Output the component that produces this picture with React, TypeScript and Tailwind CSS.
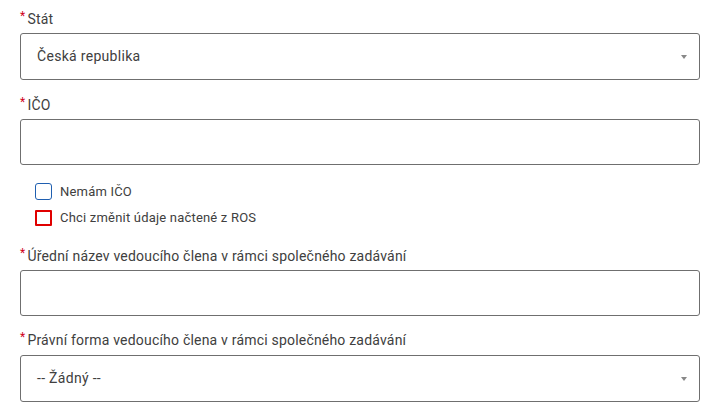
import React from 'react';

function Label({ text }: { text: string }) {
  return (
    <div className="flex h-[20px] items-start leading-[20px] text-[14px] tracking-[0.2px] text-[#404040]">
      <span className="mr-[2px] text-[12px] leading-[14px] text-[#d0021b]">*</span>
      <span>{text}</span>
    </div>
  );
}

function Select({ value }: { value: string }) {
  return (
    <div className="flex h-[47px] w-[680px] items-center justify-between rounded-[3px] border border-[#6f6f6f] bg-white pl-[16px] pr-[12px] text-[14px] tracking-[0.3px] text-[#404040]">
      <span className="[font-variant-ligatures:none]">{value}</span>
      <svg width="6" height="4" viewBox="0 0 6 4">
        <path d="M0 0 L6 0 L3 4 Z" fill="#888" />
      </svg>
    </div>
  );
}

function TextInput() {
  return <div className="h-[46px] w-[680px] rounded-[3px] border border-[#6f6f6f] bg-white" />;
}

function Checkbox({ label, error }: { label: string; error?: boolean }) {
  return (
    <div className="flex h-[17px] items-center gap-[8px] text-[13px] leading-[17px] tracking-[0.2px] text-[#404040]">
      <span
        className={
          error
            ? 'h-[16px] w-[17px] rounded-[1px] border-2 border-[#e00000] bg-white'
            : 'h-[17px] w-[17px] rounded-[3px] border border-[#1f5fb0] bg-white'
        }
      />
      <span>{label}</span>
    </div>
  );
}

export default function App() {
  return (
    <div className="min-h-[416px] bg-white pl-[20px] pt-[9px]" style={{ fontFamily: 'Roboto, "Liberation Sans", sans-serif' }}>
      <Label text="Stát" />
      <div className="mt-[4px]">
        <Select value="Česká republika" />
      </div>

      <div className="mt-[15px]">
        <Label text="IČO" />
      </div>
      <div className="mt-[4px]">
        <TextInput />
      </div>

      <div className="ml-[15px] mt-[18px] flex flex-col gap-[9px]">
        <Checkbox label="Nemám IČO" />
        <Checkbox label="Chci změnit údaje načtené z ROS" error />
      </div>

      <div className="mt-[20px]">
        <Label text="Úřední název vedoucího člena v rámci společného zadávání" />
      </div>
      <div className="mt-[4px]">
        <TextInput />
      </div>

      <div className="mt-[14px]">
        <Label text="Právní forma vedoucího člena v rámci společného zadávání" />
      </div>
      <div className="mt-[5px]">
        <Select value="-- Žádný --" />
      </div>
    </div>
  );
}
